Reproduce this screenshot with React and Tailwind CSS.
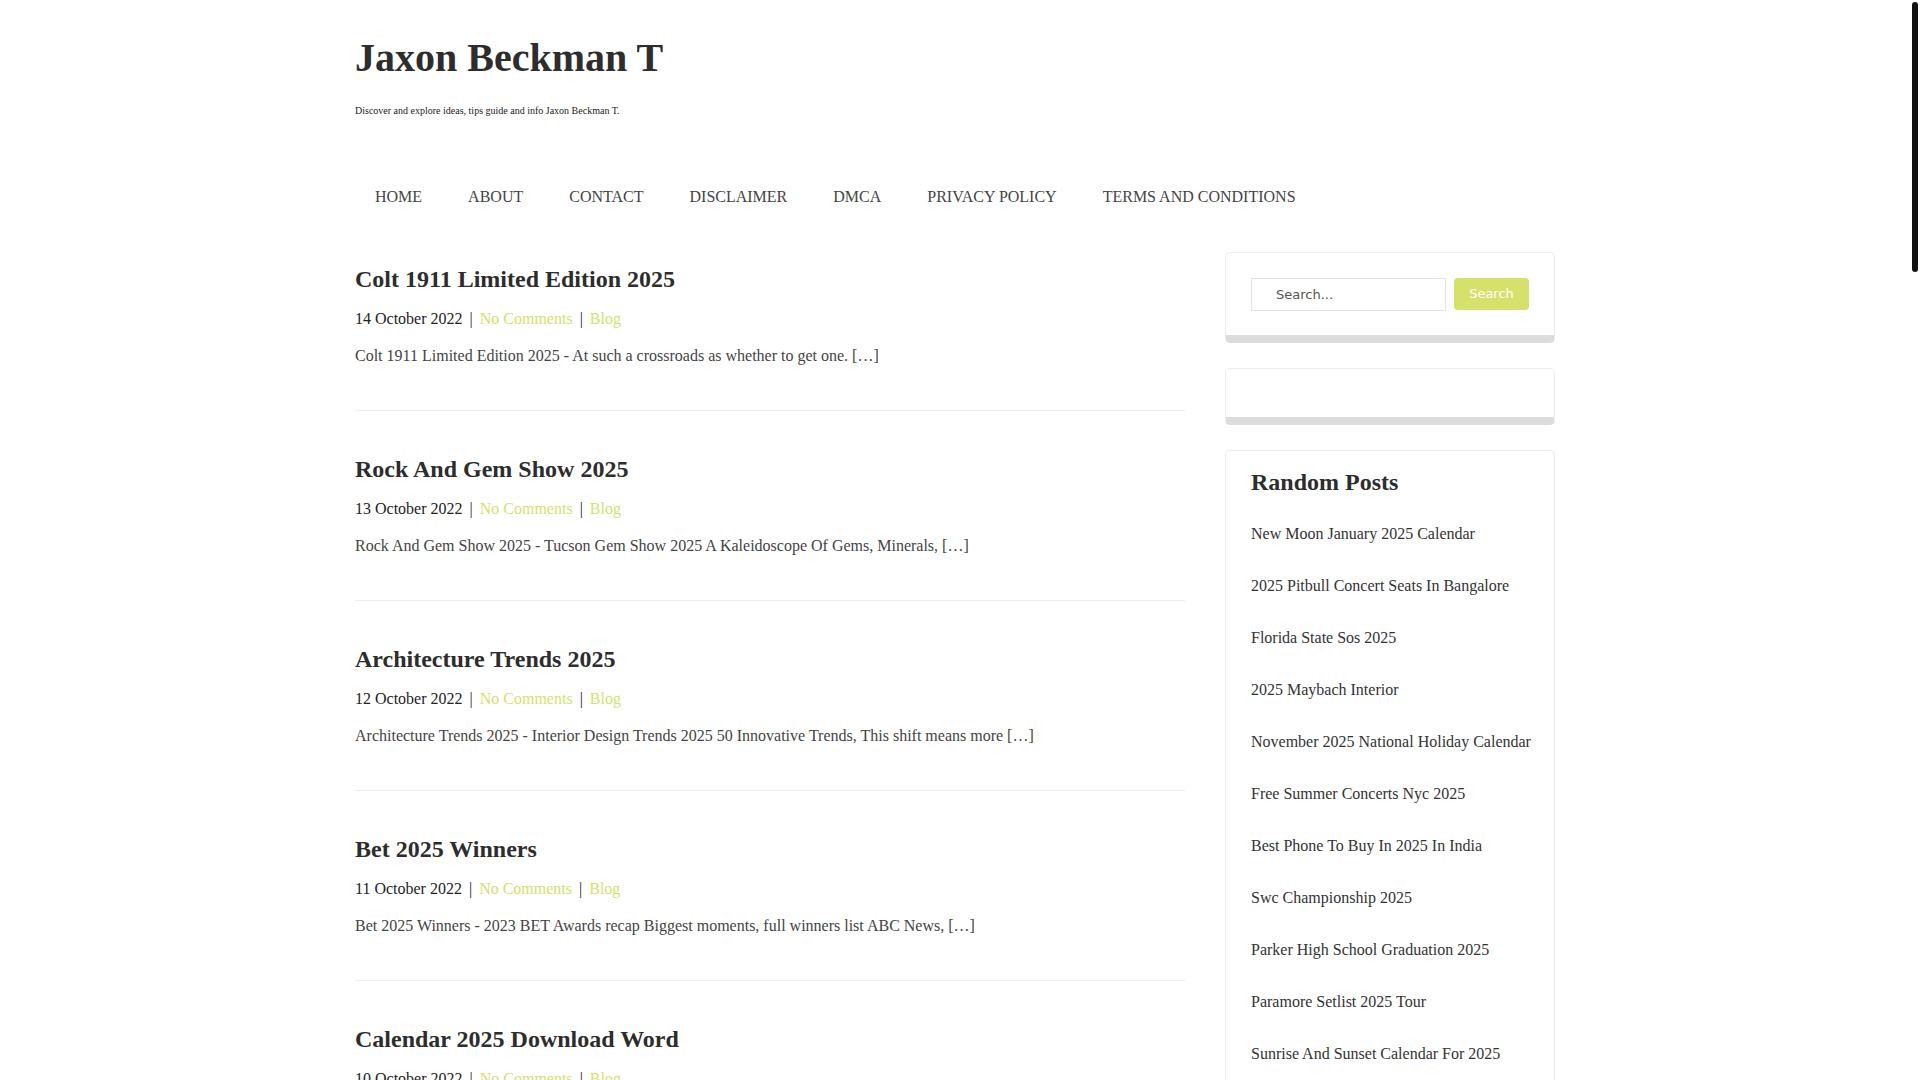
const posts = [
  {
    title: 'Colt 1911 Limited Edition 2025',
    date: '14 October 2022',
    excerpt: 'Colt 1911 Limited Edition 2025 - At such a crossroads as whether to get one. […]',
  },
  {
    title: 'Rock And Gem Show 2025',
    date: '13 October 2022',
    excerpt: 'Rock And Gem Show 2025 - Tucson Gem Show 2025 A Kaleidoscope Of Gems, Minerals, […]',
  },
  {
    title: 'Architecture Trends 2025',
    date: '12 October 2022',
    excerpt: 'Architecture Trends 2025 - Interior Design Trends 2025 50 Innovative Trends, This shift means more […]',
  },
  {
    title: 'Bet 2025 Winners',
    date: '11 October 2022',
    excerpt: 'Bet 2025 Winners - 2023 BET Awards recap Biggest moments, full winners list ABC News, […]',
  },
  {
    title: 'Calendar 2025 Download Word',
    date: '10 October 2022',
    excerpt: 'Calendar 2025 Download Word - Free printable yearly and monthly templates for every need. […]',
  },
  {
    title: 'Chevy Silverado 2025 Colors',
    date: '9 October 2022',
    excerpt: 'Chevy Silverado 2025 Colors - All exterior paint options and trims explained. […]',
  },
  {
    title: 'Spring Break 2025 Dates',
    date: '8 October 2022',
    excerpt: 'Spring Break 2025 Dates - School district schedules and travel ideas for families. […]',
  },
  {
    title: 'Honda Pilot 2025 Redesign',
    date: '7 October 2022',
    excerpt: 'Honda Pilot 2025 Redesign - What changes to expect from the next generation SUV. […]',
  },
  {
    title: 'Easter Sunday 2025 Date',
    date: '6 October 2022',
    excerpt: 'Easter Sunday 2025 Date - When the holiday falls and how it is calculated. […]',
  },
  {
    title: 'Fall Fashion Trends 2025',
    date: '5 October 2022',
    excerpt: 'Fall Fashion Trends 2025 - Colors, fabrics and silhouettes to watch this season. […]',
  },
  {
    title: 'Tax Brackets 2025 Married',
    date: '4 October 2022',
    excerpt: 'Tax Brackets 2025 Married - Filing jointly rates and standard deduction amounts. […]',
  },
  {
    title: 'Mardi Gras 2025 Parade Schedule',
    date: '3 October 2022',
    excerpt: 'Mardi Gras 2025 Parade Schedule - Routes, times and krewes for the season. […]',
  },
  {
    title: 'Toyota Tacoma 2025 Release Date',
    date: '2 October 2022',
    excerpt: 'Toyota Tacoma 2025 Release Date - Pricing, specs and availability details. […]',
  },
  {
    title: 'Coachella 2025 Lineup',
    date: '1 October 2022',
    excerpt: 'Coachella 2025 Lineup - Headliners, dates and ticket information. […]',
  },
  {
    title: 'Summer Olympics 2025 Schedule',
    date: '30 September 2022',
    excerpt: 'Summer Olympics 2025 Schedule - Events, venues and how to watch. […]',
  },
  {
    title: 'Kitchen Color Trends 2025',
    date: '29 September 2022',
    excerpt: 'Kitchen Color Trends 2025 - Warm neutrals and bold accents for your home. […]',
  },
  {
    title: 'Nfl Draft 2025 Location',
    date: '28 September 2022',
    excerpt: 'Nfl Draft 2025 Location - Host city, dates and event details. […]',
  },
  {
    title: 'Wedding Dress Trends 2025',
    date: '27 September 2022',
    excerpt: 'Wedding Dress Trends 2025 - Styles brides will love next year. […]',
  },
  {
    title: 'Ford Bronco 2025 Price',
    date: '26 September 2022',
    excerpt: 'Ford Bronco 2025 Price - Trim levels and package costs compared. […]',
  },
  {
    title: 'Lunar Eclipse 2025 Dates',
    date: '25 September 2022',
    excerpt: 'Lunar Eclipse 2025 Dates - Where and when to see the eclipses. […]',
  },
]

const randomPosts = [
  'New Moon January 2025 Calendar',
  '2025 Pitbull Concert Seats In Bangalore',
  'Florida State Sos 2025',
  '2025 Maybach Interior',
  'November 2025 National Holiday Calendar',
  'Free Summer Concerts Nyc 2025',
  'Best Phone To Buy In 2025 In India',
  'Swc Championship 2025',
  'Parker High School Graduation 2025',
  'Paramore Setlist 2025 Tour',
  'Sunrise And Sunset Calendar For 2025',
  'Jeep Wrangler 2025 Models',
  'Printable 2025 Monthly Planner',
  'Best Cruises For 2025',
  'Hair Color Trends 2025',
]

const navItems = ['HOME', 'ABOUT', 'CONTACT', 'DISCLAIMER', 'DMCA', 'PRIVACY POLICY', 'TERMS AND CONDITIONS']

function Post({ post, first }) {
  return (
    <article className={`${first ? 'pt-[12px]' : 'pt-[44px]'} pb-[42px] border-b border-[#ececec]`}>
      <h2 className="text-[24px] leading-[29px] font-bold text-[#2d2d2d]">{post.title}</h2>
      <div className="mt-[13px] text-[16px] leading-6 text-[#222]">
        {post.date}
        <span className="px-[7px]">|</span>
        <a className="text-[#d5e16b]">No Comments</a>
        <span className="px-[7px]">|</span>
        <a className="text-[#d5e16b]">Blog</a>
      </div>
      <p className="mt-[13px] text-[16px] leading-6 text-[#444]">{post.excerpt}</p>
    </article>
  )
}

export default function App() {
  return (
    <div className="min-h-screen bg-white pr-[10px] font-['Liberation_Serif',serif]">
      {/* scrollbar thumb */}
      <div className="fixed right-[2px] top-[2px] w-[6px] h-[270px] rounded-full bg-[#111]" />

      <div className="w-[1200px] mx-auto">
        {/* Header */}
        <header className="pt-[34px]">
          <h1 className="text-[40px] leading-[48px] font-bold text-[#2d2d2d]">Jaxon Beckman T</h1>
          <p className="mt-[21px] text-[10px] leading-[15px] text-[#222]">
            Discover and explore ideas, tips guide and info Jaxon Beckman T.
          </p>
          <nav className="mt-[67px] flex gap-[6px]">
            {navItems.map(item => (
              <a key={item} className="px-5 text-[16px] leading-6 text-[#444]">{item}</a>
            ))}
          </nav>
        </header>

        {/* Content */}
        <div className="mt-[43px] flex items-start gap-10 pb-16">
          <main className="w-[830px] mt-px">
            {posts.map((post, i) => (
              <Post key={post.title} post={post} first={i === 0} />
            ))}
          </main>

          <aside className="w-[330px] flex flex-col gap-[25px]">
            <div className="border border-[#ececec] border-b-[8px] border-b-[#dcdcdc] rounded-[5px] p-[25px] pb-[24px]">
              <div className="flex items-start gap-2 font-['DejaVu_Sans',sans-serif]">
                <input
                  placeholder="Search..."
                  className="flex-1 min-w-0 h-[33px] border border-[#e2e2e2] px-[24px] text-[13px] text-[#555] placeholder:text-[#555] outline-none"
                />
                <button className="w-[75px] h-[32px] rounded-[4px] bg-[#d5e16b] text-white text-[13px]">Search</button>
              </div>
            </div>

            <div className="border border-[#ececec] border-b-[8px] border-b-[#dcdcdc] rounded-[5px] h-[57px]" />

            <div className="border border-[#ececec] border-b-[8px] border-b-[#dcdcdc] rounded-[5px] pl-[25px] pr-[18px] pt-[17px] pb-4">
              <h3 className="text-[24px] leading-[29px] font-bold text-[#2d2d2d]">Random Posts</h3>
              <ul className="mt-[11px]">
                {randomPosts.map(title => (
                  <li key={title} className="py-[14px] text-[16px] leading-6 text-[#333]">{title}</li>
                ))}
              </ul>
            </div>
          </aside>
        </div>
      </div>
    </div>
  )
}
